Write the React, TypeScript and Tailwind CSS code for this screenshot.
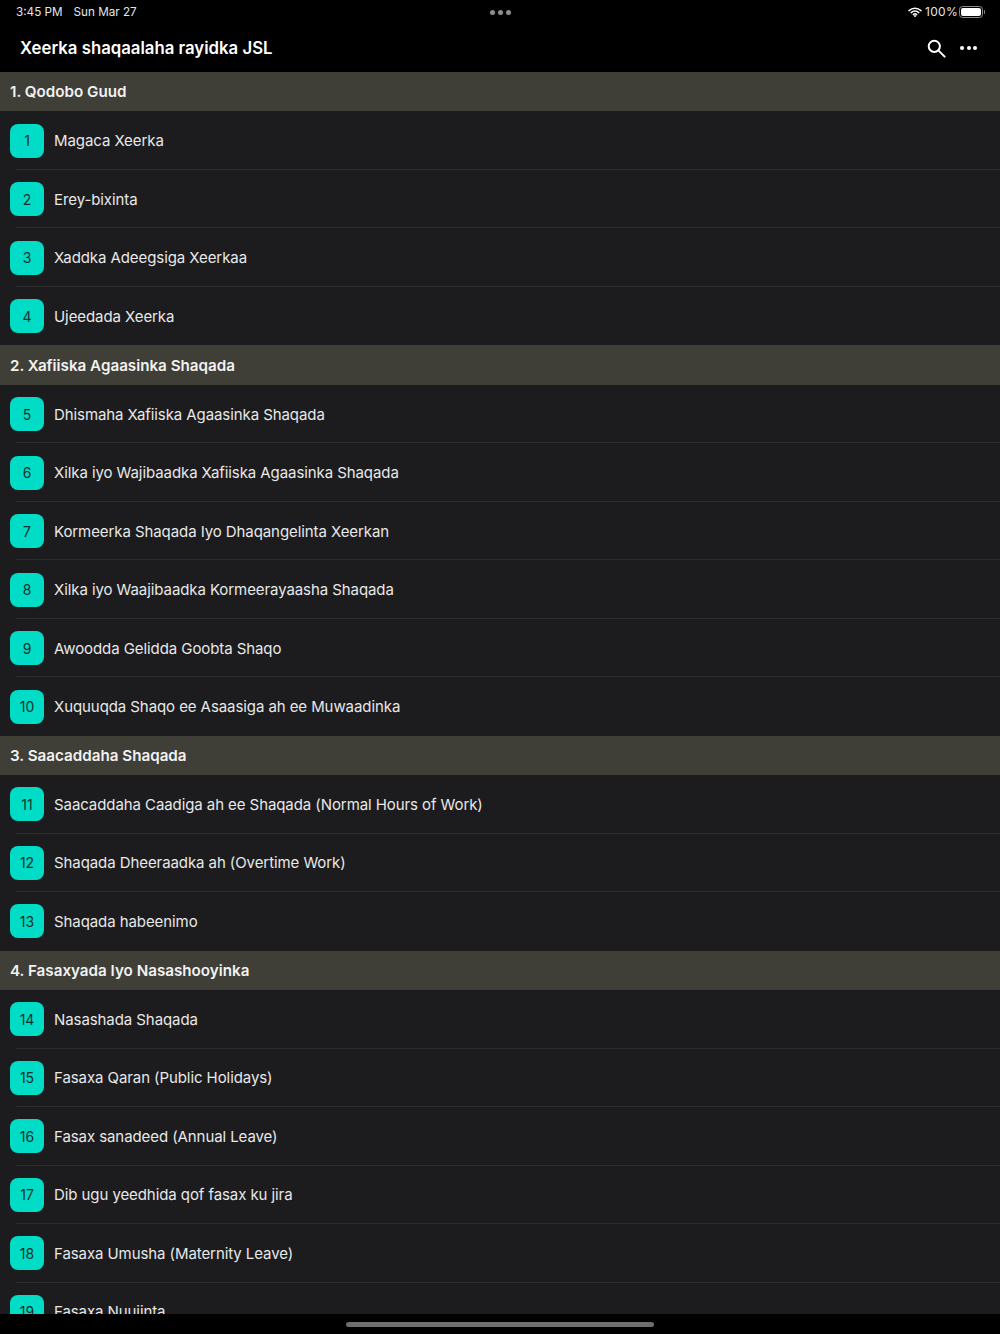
import { Fragment } from 'react';

const sections: { title: string; items: [number, string][] }[] = [
  {
    title: '1. Qodobo Guud',
    items: [
      [1, 'Magaca Xeerka'],
      [2, 'Erey-bixinta'],
      [3, 'Xaddka Adeegsiga Xeerkaa'],
      [4, 'Ujeedada Xeerka'],
    ],
  },
  {
    title: '2. Xafiiska Agaasinka Shaqada',
    items: [
      [5, 'Dhismaha Xafiiska Agaasinka Shaqada'],
      [6, 'Xilka iyo Wajibaadka Xafiiska Agaasinka Shaqada'],
      [7, 'Kormeerka Shaqada Iyo Dhaqangelinta Xeerkan'],
      [8, 'Xilka iyo Waajibaadka Kormeerayaasha Shaqada'],
      [9, 'Awoodda Gelidda Goobta Shaqo'],
      [10, 'Xuquuqda Shaqo ee Asaasiga ah ee Muwaadinka'],
    ],
  },
  {
    title: '3. Saacaddaha Shaqada',
    items: [
      [11, 'Saacaddaha Caadiga ah ee Shaqada (Normal Hours of Work)'],
      [12, 'Shaqada Dheeraadka ah (Overtime Work)'],
      [13, 'Shaqada habeenimo'],
    ],
  },
  {
    title: '4. Fasaxyada Iyo Nasashooyinka',
    items: [
      [14, 'Nasashada Shaqada'],
      [15, 'Fasaxa Qaran (Public Holidays)'],
      [16, 'Fasax sanadeed (Annual Leave)'],
      [17, 'Dib ugu yeedhida qof fasax ku jira'],
      [18, 'Fasaxa Umusha (Maternity Leave)'],
      [19, 'Fasaxa Nuujinta'],
    ],
  },
];

function StatusBar() {
  return (
    <div className="flex h-6 items-center justify-between pl-4 pr-[15px] text-[11.7px] text-[#e6e6e6]">
      <div className="mt-[1px] flex gap-[11px]">
        <span>3:45 PM</span>
        <span>Sun Mar 27</span>
      </div>
      <div className="flex items-center">
        <svg className="mr-[3px]" width="14" height="10" viewBox="0 0 14 10" fill="none" stroke="#fff" strokeLinecap="round">
          <path d="M1 3.6C4.4.5 9.6.5 13 3.6" strokeWidth="1.5" />
          <path d="M3.2 5.6c2.2-2 5.4-2 7.6 0" strokeWidth="1.5" />
          <path d="M5.3 7.6c1-.9 2.4-.9 3.4 0" strokeWidth="1.5" />
          <circle cx="7" cy="9" r=".6" fill="#fff" strokeWidth=".8" />
        </svg>
        <span className="mr-[1px] text-[12px] tracking-[0.3px]">100%</span>
        <div className="flex items-center gap-[1px]">
          <div className="h-[12px] w-[24px] rounded-[3.5px] border border-[#8a8a8a] p-[1px]">
            <div className="h-full w-full rounded-[2px] bg-white" />
          </div>
          <div className="h-[4px] w-[1px] rounded-r-sm bg-[#8a8a8a]" />
        </div>
      </div>
    </div>
  );
}

export default function App() {
  return (
    <div
      className="relative flex h-[1334px] w-[1000px] flex-col overflow-hidden bg-[#1c1c1e]"
      style={{ fontFamily: 'Inter, "Noto Sans", sans-serif' }}
    >
      <header className="h-[72px] shrink-0 bg-black">
        <StatusBar />
        <div className="flex h-[48px] items-center justify-between pl-5 pr-[23px]">
          <h1 className="mt-[1px] text-[16.75px] font-semibold text-white">Xeerka shaqaalaha rayidka JSL</h1>
          <div className="flex items-center gap-[14px]">
            <svg width="19" height="19" viewBox="0 0 19 19" fill="none" stroke="#fff" strokeWidth="2" strokeLinecap="round">
              <circle cx="7.3" cy="7.3" r="5.6" />
              <path d="M11.6 11.6 17.6 17.6" />
            </svg>
            <div className="flex gap-[2.5px]">
              <span className="h-1 w-1 rounded-full bg-white" />
              <span className="h-1 w-1 rounded-full bg-white" />
              <span className="h-1 w-1 rounded-full bg-white" />
            </div>
          </div>
        </div>
      </header>

      {/* multitasking dots */}
      <div className="absolute left-[490px] top-[10px] flex gap-[2.75px]">
        <span className="h-[5px] w-[5px] rounded-full bg-[#8e8e8e]" />
        <span className="h-[5px] w-[5px] rounded-full bg-[#8e8e8e]" />
        <span className="h-[5px] w-[5px] rounded-full bg-[#8e8e8e]" />
      </div>

      <main className="min-h-0 flex-1 overflow-hidden">
        {sections.map((s) => (
          <Fragment key={s.title}>
            <div className="flex h-[39.4px] items-center bg-[#3f3f38] px-[10px] text-[15.2px] font-semibold text-[#f2f2f2]">
              <span className="mt-[2px]">{s.title}</span>
            </div>
            {s.items.map(([n, label], i) => (
              <div key={n} className="relative flex h-[58.5px] items-center pl-[10px]">
                <div className="flex h-[34px] w-[34px] shrink-0 items-center justify-center rounded-[8px] bg-[#00dcc6] text-[14px] text-[#10302d]">
                  {n}
                </div>
                <div className="ml-[10px] mt-[1.5px] text-[15px] tracking-[-0.08px] text-[#e8e8e8]">{label}</div>
                {i < s.items.length - 1 && (
                  <div className="absolute bottom-0 left-4 right-0 h-px bg-[#2e2e30]" />
                )}
              </div>
            ))}
          </Fragment>
        ))}
      </main>

      <footer className="flex h-5 shrink-0 items-center justify-center bg-black">
        <div className="h-[5px] w-[308px] rounded-full bg-[#6e6e6e]" />
      </footer>
    </div>
  );
}
